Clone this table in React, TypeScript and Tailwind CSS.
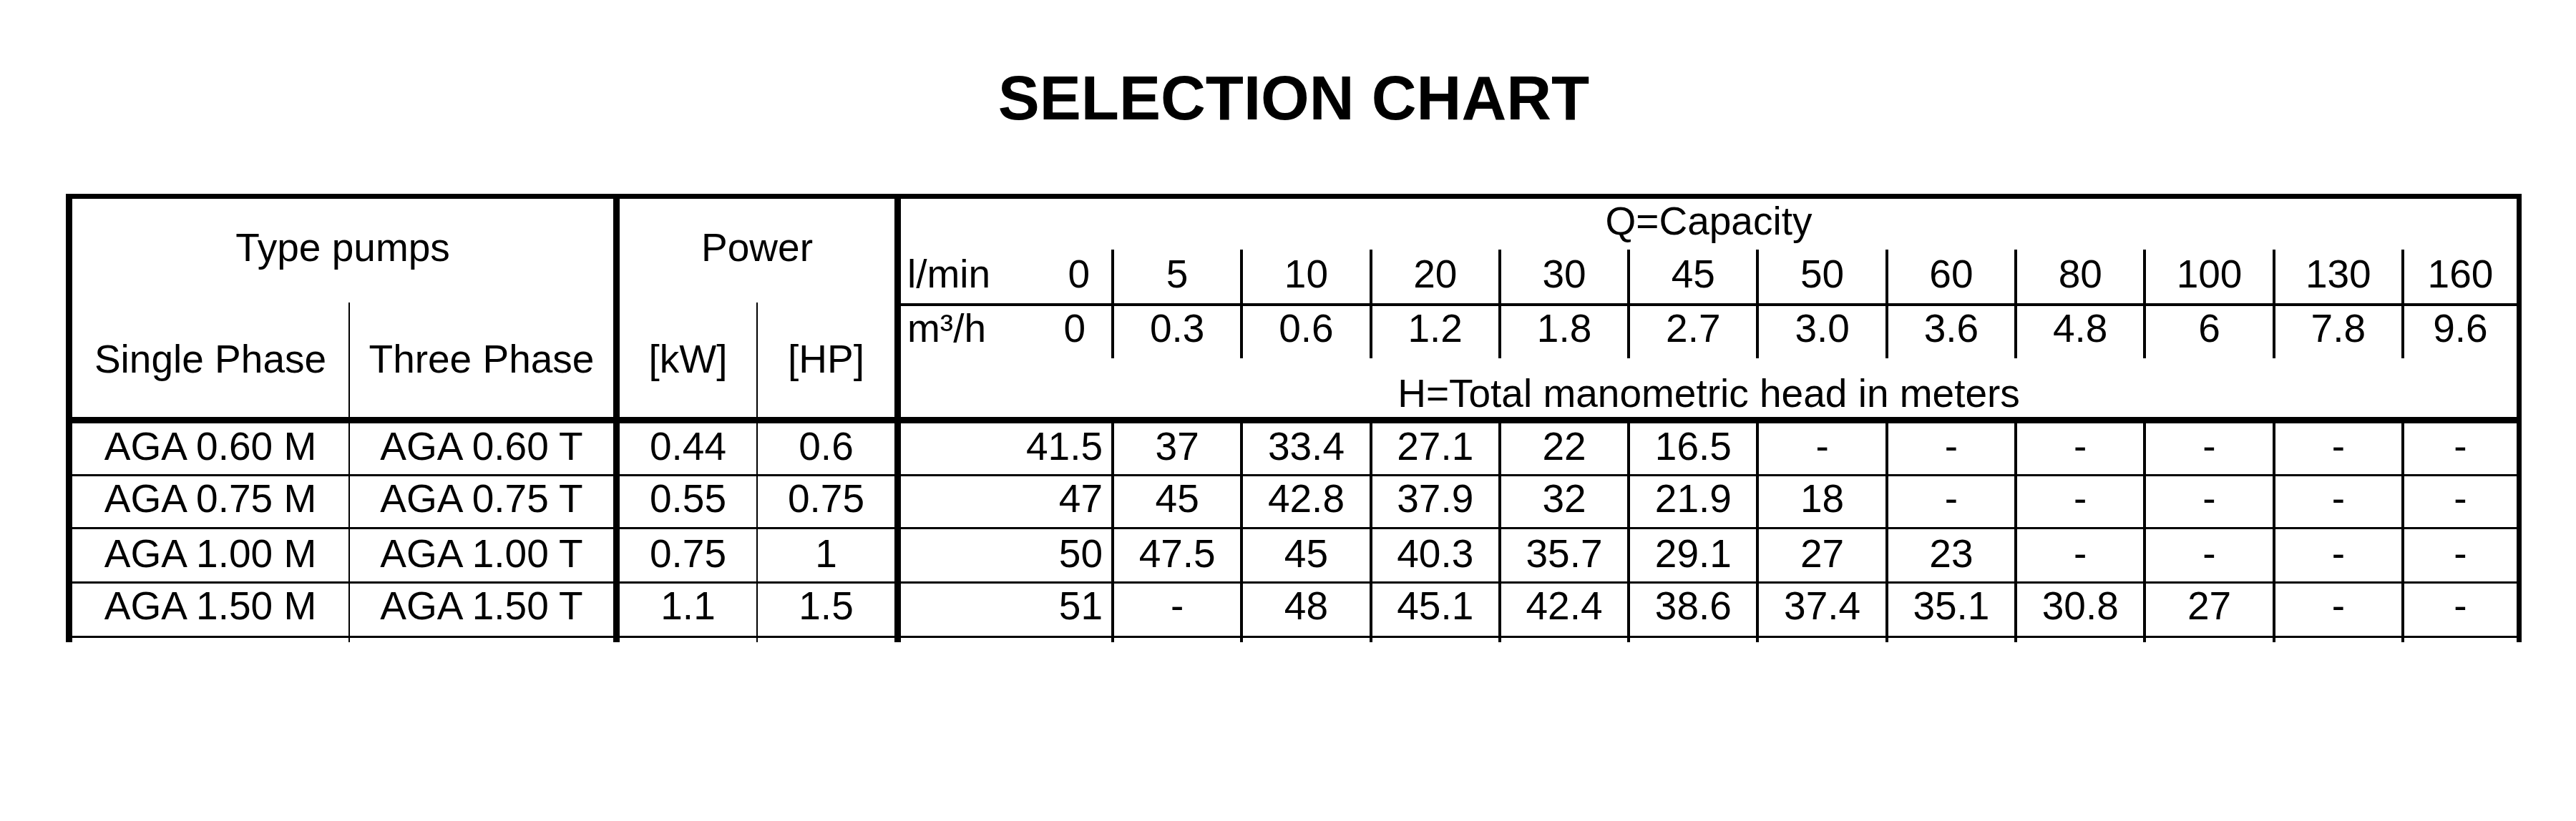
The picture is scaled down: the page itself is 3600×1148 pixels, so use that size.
const flowLpm = ['5', '10', '20', '30', '45', '50', '60', '80', '100', '130', '160'];
const flowM3h = ['0.3', '0.6', '1.2', '1.8', '2.7', '3.0', '3.6', '4.8', '6', '7.8', '9.6'];

const pumps = [
  { single: 'AGA 0.60 M', three: 'AGA 0.60 T', kw: '0.44', hp: '0.6', pad: 'pt-[5px]', h: 'h-[74px]', head: ['41.5', '37', '33.4', '27.1', '22', '16.5', '-', '-', '-', '-', '-', '-'] },
  { single: 'AGA 0.75 M', three: 'AGA 0.75 T', kw: '0.55', hp: '0.75', pad: 'pt-[4px]', h: 'h-[74px]', head: ['47', '45', '42.8', '37.9', '32', '21.9', '18', '-', '-', '-', '-', '-'] },
  { single: 'AGA 1.00 M', three: 'AGA 1.00 T', kw: '0.75', hp: '1', pad: 'pt-[7px]', h: 'h-[76px]', head: ['50', '47.5', '45', '40.3', '35.7', '29.1', '27', '23', '-', '-', '-', '-'] },
  { single: 'AGA 1.50 M', three: 'AGA 1.50 T', kw: '1.1', hp: '1.5', pad: 'pt-[4px]', h: 'h-[76px]', head: ['51', '-', '48', '45.1', '42.4', '38.6', '37.4', '35.1', '30.8', '27', '-', '-'] },
];

function FlowRow({ label, first, values, className, pad }: { label: string; first: string; values: string[]; className: string; pad: string }) {
  return (
    <div className={`flex ${className}`}>
      <div className={`flex w-[294px] justify-between pl-[9px] ${pad}`}>
        <span>{label}</span>
        <span>{first}</span>
      </div>
      {values.map((v, i) => (
        <div
          key={i}
          className={`border-l-4 border-black text-center ${pad.split(' ')[0]} ${i === values.length - 1 ? 'flex-1' : 'w-[180.3px]'}`}
        >
          {v}
        </div>
      ))}
    </div>
  );
}

export default function App() {
  return (
    <div className="h-[1148px] w-[3600px] bg-white font-['Liberation_Sans',Arial,sans-serif] text-[55px] leading-none text-black">
      <div className="ml-[92px] w-[3432px] pt-[93px]">
        <h1 className="h-[87px] text-center text-[87px] font-bold leading-none">SELECTION CHART</h1>

        <div className="mt-[91px] border-l-[9px] border-r-[7px] border-t-[7px] border-black">
          {/* header */}
          <div className="flex h-[314px] border-b-[9px] border-black">
            <div className="flex w-[756px] flex-col">
              <div className="h-[145px] pt-[41px] text-center">Type pumps</div>
              <div className="flex flex-1">
                <div className="w-[386px] pt-[52px] text-center">Single Phase</div>
                <div className="flex-1 border-l-2 border-black pt-[52px] text-center">Three Phase</div>
              </div>
            </div>
            <div className="flex w-[393px] flex-col border-l-[9px] border-black">
              <div className="h-[145px] pt-[41px] text-center">Power</div>
              <div className="flex flex-1">
                <div className="w-[191px] pt-[52px] text-center">[kW]</div>
                <div className="flex-1 border-l-2 border-black pt-[52px] text-center">[HP]</div>
              </div>
            </div>
            <div className="flex flex-1 flex-col border-l-[9px] border-black">
              <div className="h-[71px] pt-[4px] text-center">Q=Capacity</div>
              <FlowRow label="l/min" first="0" values={flowLpm} className="h-[79px] border-b-4 border-black" pad="pt-[7px] pr-[30px]" />
              <FlowRow label="m³/h" first="0" values={flowM3h} className="h-[73px]" pad="pt-[4px] pr-[36px]" />
              <div className="flex-1 pt-[22px] text-center">H=Total manometric head in meters</div>
            </div>
          </div>

          {/* body */}
          {pumps.map((p) => (
            <div key={p.single} className={`flex ${p.h} border-b-[3px] border-black`}>
              <div className={`w-[386px] text-center ${p.pad}`}>{p.single}</div>
              <div className={`w-[370px] border-l-2 border-black text-center ${p.pad}`}>{p.three}</div>
              <div className={`w-[200px] border-l-[9px] border-black text-center ${p.pad}`}>{p.kw}</div>
              <div className={`w-[193px] border-l-2 border-black text-center ${p.pad}`}>{p.hp}</div>
              <div className={`w-[303px] border-l-[9px] border-black pr-[12px] text-right ${p.pad}`}>{p.head[0]}</div>
              {p.head.slice(1).map((v, i) => (
                <div
                  key={i}
                  className={`border-l-4 border-black text-center ${p.pad} ${i === 10 ? 'flex-1' : 'w-[180.3px]'}`}
                >
                  {v}
                </div>
              ))}
            </div>
          ))}

          {/* cut-off edge of the next row */}
          <div className="flex h-[6px]">
            <div className="w-[386px]" />
            <div className="w-[370px] border-l-2 border-black" />
            <div className="w-[200px] border-l-[9px] border-black" />
            <div className="w-[193px] border-l-2 border-black" />
            <div className="w-[303px] border-l-[9px] border-black" />
            {flowLpm.map((f, i) => (
              <div key={f} className={`border-l-4 border-black ${i === 10 ? 'flex-1' : 'w-[180.3px]'}`} />
            ))}
          </div>
        </div>
      </div>
    </div>
  );
}
